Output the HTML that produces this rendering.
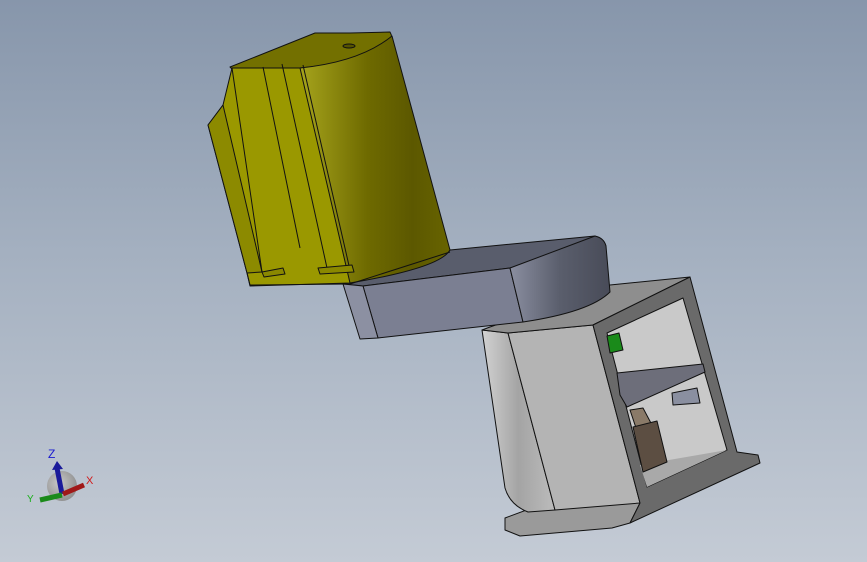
<!DOCTYPE html>
<html><head><style>
html,body{margin:0;padding:0;width:867px;height:562px;overflow:hidden}
body{background:linear-gradient(180deg,#8796ab 0%,#a4b0c0 45%,#c4cbd5 100%)}
svg{position:absolute;left:0;top:0}
</style></head><body>
<svg width="867" height="562" viewBox="0 0 867 562">
<defs>
<linearGradient id="cyl" x1="0" y1="0" x2="1" y2="0">
<stop offset="0" stop-color="#a6a41c"/><stop offset="0.45" stop-color="#6e6a00"/><stop offset="0.75" stop-color="#5c5800"/><stop offset="1" stop-color="#686400"/></linearGradient>
<linearGradient id="arm" x1="0" y1="0" x2="1" y2="0">
<stop offset="0" stop-color="#8a8ea0"/><stop offset="0.5" stop-color="#5a5e6c"/><stop offset="1" stop-color="#484b58"/></linearGradient>
<linearGradient id="side" x1="0" y1="0" x2="1" y2="0">
<stop offset="0" stop-color="#d2d2d2"/><stop offset="0.5" stop-color="#a4a4a4"/><stop offset="1" stop-color="#bcbcbc"/></linearGradient>
<radialGradient id="sph" cx="0.4" cy="0.4" r="0.7"><stop offset="0" stop-color="#c8c8c8"/><stop offset="1" stop-color="#8a8a8a"/></radialGradient>
</defs>
<g stroke="#111" stroke-width="1" stroke-linejoin="round">
<!-- base plate -->
<polygon points="505,518 540,505 630,500 640,503 630,523 612,528 520,536 505,530" fill="#9a9a9a"/>
<!-- gray box left rounded side -->
<path d="M482,330 L508,333 L555,510 L528,512 Q510,505 505,488 Z" fill="url(#side)"/>
<!-- box front -->
<polygon points="508,333 593,325 640,503 555,510" fill="#b4b4b4"/>
<!-- box top -->
<polygon points="482,330 490,327 610,285 690,277 593,325 508,333" fill="#8e8e8e"/>
<!-- frame -->
<polygon points="593,325 690,277 737,452 758,455 760,463 630,523 640,503" fill="#6a6a6a"/>
<polygon points="607,333 683,298 727,450 647,487" fill="#c9c9c9"/>
<polygon points="640,465 727,450 647,487" fill="#a9a9a9" stroke="none"/>
<polygon points="630,410 643,408 652,425 636,428" fill="#8a7a68"/>
<polygon points="633,427 657,421 667,462 643,472" fill="#5c4e42"/>
<polygon points="672,393 697,388 700,403 673,405" fill="#8a8fa0"/>
<polygon points="617,373 703,364 705,372 627,407 620,395" fill="#6d6e7a"/>
<polygon points="607,336 619,333 623,350 610,353" fill="#1a8a1a"/>
<!-- gray arm -->
<polygon points="343,284 450,250 595,236 606,246 510,268 363,286" fill="#595d6c"/>
<polygon points="363,286 510,268 523,322 378,338" fill="#7b7f92"/>
<polygon points="343,284 363,286 378,338 360,339" fill="#8c90a2"/>
<path d="M510,268 L595,236 Q604,238 606,246 L610,292 Q590,312 523,322 Z" fill="url(#arm)"/>
<!-- yellow motor -->
<path d="M230,67 L315,33 L350,33 L390,32 Q395,40 385,50 Q360,62 300,68 L232,69 Z" fill="#737000"/>
<path d="M300,68 Q360,62 392,36 L450,250 Q440,268 350,283 L320,284 Z" fill="url(#cyl)"/>
<polygon points="232,68 300,68 350,283 250,286 247,273 208,125 223,105" fill="#9a9800"/>
<polygon points="208,125 223,105 262,272 247,273" fill="#8c8a00"/>
<polyline points="232,68 262,272" fill="none"/>
<polyline points="263,67 300,248" fill="none"/>
<polyline points="282,64 327,268" fill="none"/>
<polyline points="303,65 350,270" fill="none"/>
<polygon points="262,272 283,268 285,274 264,277" fill="#8a8800"/>
<polygon points="318,268 352,265 354,272 320,274" fill="#8a8800"/>
<polyline points="247,273 250,285 350,284 450,252" fill="none"/>
<ellipse cx="349" cy="46" rx="6" ry="2" fill="#555300"/>
</g>
<!-- triad -->
<circle cx="62" cy="486" r="15" fill="url(#sph)"/>
<line x1="62" y1="494" x2="57" y2="468" stroke="#1a1a9a" stroke-width="5"/>
<polygon points="52,470 57,461 63,469" fill="#1a1a9a"/>
<line x1="63" y1="494" x2="84" y2="485" stroke="#a01818" stroke-width="5"/>
<line x1="62" y1="495" x2="40" y2="500" stroke="#1a8a1a" stroke-width="5"/>
<text x="48" y="458" font-family="Liberation Sans,sans-serif" font-size="12" fill="#1a1ad0">Z</text>
<text x="86" y="484" font-family="Liberation Sans,sans-serif" font-size="11" fill="#d01a1a">X</text>
<text x="27" y="502" font-family="Liberation Sans,sans-serif" font-size="10" fill="#1ab01a">Y</text>
</svg>
</body></html>
